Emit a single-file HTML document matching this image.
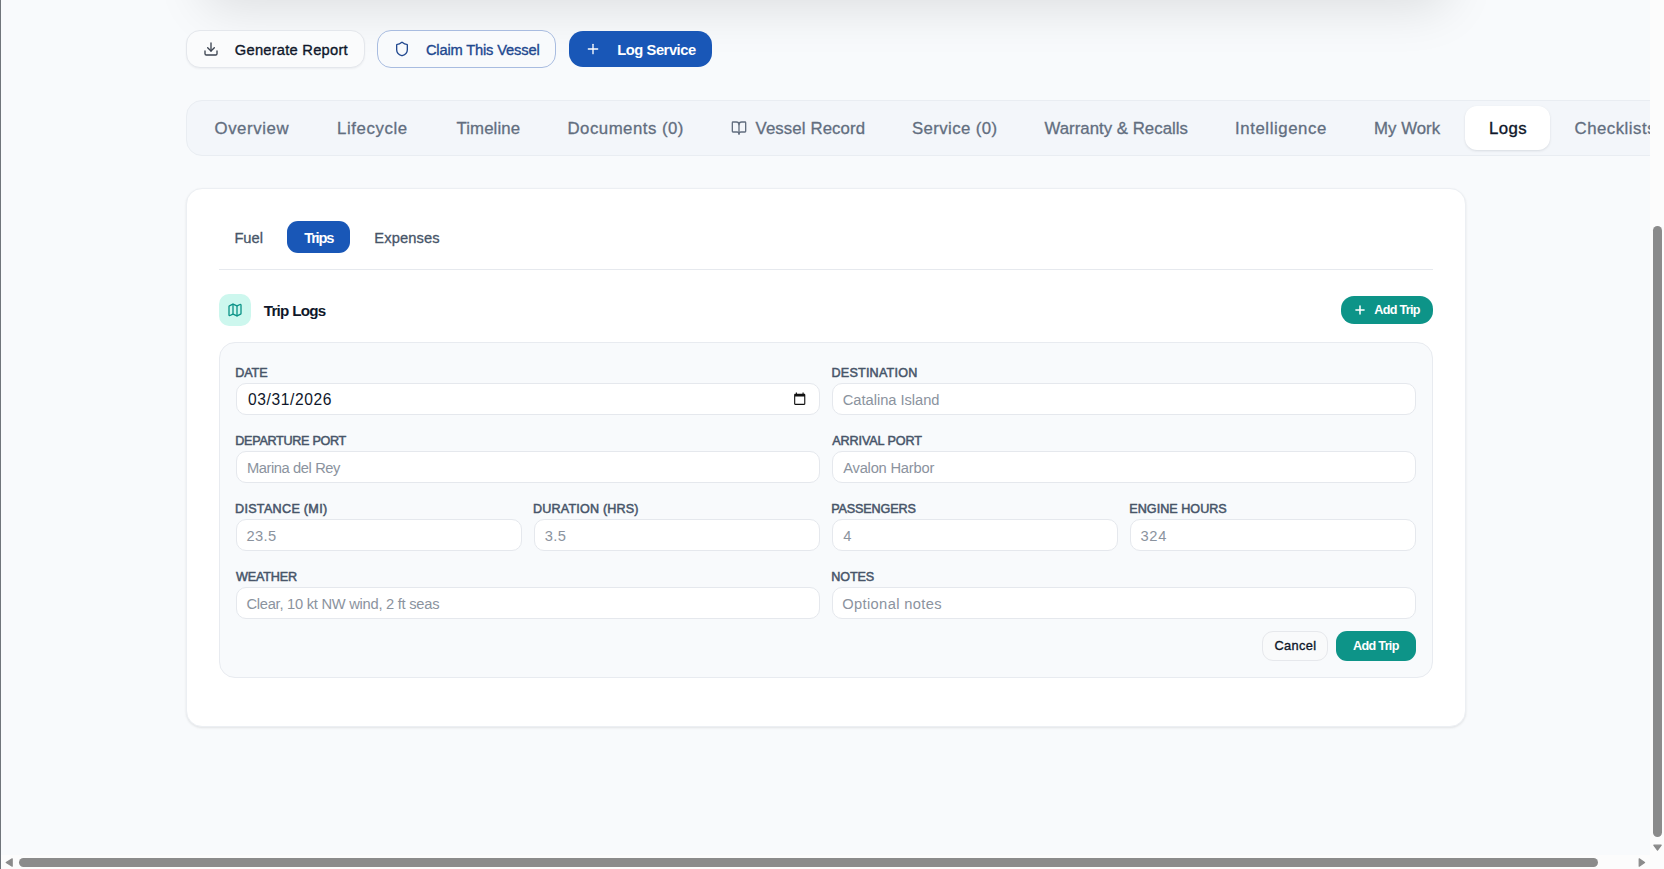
<!DOCTYPE html>
<html lang="en">
<head>
<meta charset="utf-8">
<title>Vessel Logs</title>
<style>
*{box-sizing:border-box;margin:0;padding:0}
html,body{width:1664px;height:869px;overflow:hidden}
body{position:relative;background:#f8fafc;font-family:"Liberation Sans",sans-serif;color:#0f172a;-webkit-font-smoothing:antialiased}
.abs{position:absolute}
.t{position:absolute;white-space:nowrap;line-height:1}
/* page chrome */
#leftedge{left:0;top:0;width:1px;height:869px;background:#70757b}
#vtrack{left:1650px;top:0;width:14px;height:869px;background:#fcfcfc}
#htrack{left:1px;top:855px;width:1649px;height:14px;background:#fcfcfc}
#vthumb{left:1653px;top:226px;width:9px;height:611px;border-radius:5px;background:#8b8b8b}
#hthumb{left:19px;top:858px;width:1579px;height:9px;border-radius:5px;background:#8b8b8b}
/* top shadow from card above */
#topshadow{left:204px;top:-300px;width:1244px;height:100px;border-radius:16px;box-shadow:0 208px 50px 0 rgba(0,0,0,.114)}
/* action buttons */
.btn{position:absolute;top:30px;height:38px;border-radius:14px}
#b1{left:186px;width:179px;background:#fafbfc;border:1px solid #e4e7ec;box-shadow:0 1px 2px rgba(15,23,42,.05)}
#b2{left:377px;width:179px;background:#f8fafc;border:1px solid #a8bce0}
#b3{left:569px;width:143px;background:#1957b7;top:31px;height:36px}
/* tab bar */
#tabbar{left:186px;top:100px;width:1500px;height:56px;border-radius:16px;background:#f3f6fa;border:1px solid #e9edf2}
#tabactive{left:1465px;top:106px;width:85px;height:44px;border-radius:12px;background:#fff;box-shadow:0 1px 3px rgba(15,23,42,.08),0 1px 2px rgba(15,23,42,.04)}
.tab{font-size:17px;color:#64748b;top:119px}
/* card */
#card{left:186px;top:188px;width:1280px;height:539px;border-radius:16px;background:#fff;border:1px solid #eceff3;box-shadow:0 1px 3px rgba(0,0,0,.06),0 1px 2px rgba(0,0,0,.04)}
#pill{left:287px;top:221px;width:63px;height:32px;border-radius:11px;background:#1957b7}
.sub{font-size:15px;color:#475569;top:230px}
#divider{left:219px;top:269px;width:1214px;height:1px;background:#e6e9ee}
#icobox{left:219px;top:294px;width:32px;height:32px;border-radius:10px;background:#cdf7ee}
#addtop{left:1341px;top:296px;width:92px;height:28px;border-radius:13px;background:#0d9488}
/* form */
#form{left:219px;top:342px;width:1214px;height:336px;border-radius:16px;background:#f8fafc;border:1px solid #e8ebf0}
.lbl{font-size:12px;font-weight:700;color:#475569;letter-spacing:.4px}
.inp{position:absolute;height:32px;border-radius:10px;background:#fff;border:1px solid #e5e8ed}
.ph{font-size:14px;color:#8e96a1}
#cancel{left:1262px;top:631px;width:66px;height:30px;border-radius:11px;background:#f9fafb;border:1px solid #e6e8ec}
#addbtm{left:1336px;top:631px;width:80px;height:30px;border-radius:11px;background:#0d9488}
</style>
</head>
<body>
<div class="abs" id="topshadow"></div>

<!-- action buttons -->
<div class="btn" id="b1"></div>
<div class="btn" id="b2"></div>
<div class="btn" id="b3"></div>

<!-- tab bar -->
<div class="abs" id="tabbar"></div>
<div class="abs" id="tabactive"></div>

<!-- card -->
<div class="abs" id="card"></div>
<div class="abs" id="pill"></div>
<div class="abs" id="divider"></div>
<div class="abs" id="icobox"></div>
<div class="abs" id="addtop"></div>
<div class="abs" id="form"></div>
<div class="abs" id="cancel"></div>
<div class="abs" id="addbtm"></div>

<!-- inputs -->
<div class="inp" style="left:236px;top:383px;width:584px"></div>
<div class="inp" style="left:832px;top:383px;width:584px"></div>
<div class="inp" style="left:236px;top:451px;width:584px"></div>
<div class="inp" style="left:832px;top:451px;width:584px"></div>
<div class="inp" style="left:236px;top:587px;width:584px"></div>
<div class="inp" style="left:832px;top:587px;width:584px"></div>
<div class="inp" style="left:236px;top:519px;width:286px"></div>
<div class="inp" style="left:534px;top:519px;width:286px"></div>
<div class="inp" style="left:832px;top:519px;width:286px"></div>
<div class="inp" style="left:1130px;top:519px;width:286px"></div>

<!-- icons -->
<svg class="abs" style="left:203px;top:41px" width="16" height="16" viewBox="0 0 24 24" fill="none" stroke="#3b4350" stroke-width="2" stroke-linecap="round" stroke-linejoin="round"><path d="M21 15v4a2 2 0 0 1-2 2H5a2 2 0 0 1-2-2v-4"/><path d="M7 10l5 5 5-5"/><path d="M12 15V3"/></svg>
<svg class="abs" style="left:394px;top:41px" width="16" height="16" viewBox="0 0 24 24" fill="none" stroke="#21488f" stroke-width="2" stroke-linecap="round" stroke-linejoin="round"><path d="M20 13c0 5-3.5 7.5-7.66 8.95a1 1 0 0 1-.67-.01C7.5 20.500 4 18 4 13V6a1 1 0 0 1 1-1c2 0 4.500-1.200 6.240-2.720a1.170 1.170 0 0 1 1.520 0C14.510 3.810 17 5 19 5a1 1 0 0 1 1 1z"/></svg>
<svg class="abs" style="left:585px;top:41px" width="16" height="16" viewBox="0 0 24 24" fill="none" stroke="#ffffff" stroke-width="2" stroke-linecap="round" stroke-linejoin="round"><path d="M5 12h14"/><path d="M12 5v14"/></svg>
<svg class="abs" style="left:731px;top:120px" width="16" height="16" viewBox="0 0 24 24" fill="none" stroke="#626e7f" stroke-width="2" stroke-linecap="round" stroke-linejoin="round"><path d="M12 7v14"/><path d="M3 18a1 1 0 0 1-1-1V4a1 1 0 0 1 1-1h5a4 4 0 0 1 4 4 4 4 0 0 1 4-4h5a1 1 0 0 1 1 1v13a1 1 0 0 1-1 1h-6a3 3 0 0 0-3 3 3 3 0 0 0-3-3z"/></svg>
<svg class="abs" style="left:227px;top:302px" width="16" height="16" viewBox="0 0 24 24" fill="none" stroke="#0d9488" stroke-width="2" stroke-linecap="round" stroke-linejoin="round"><path d="M14.106 5.553a2 2 0 0 0 1.788 0l3.659-1.830A1 1 0 0 1 21 4.619v12.764a1 1 0 0 1-.553.894l-4.553 2.277a2 2 0 0 1-1.788 0l-4.212-2.106a2 2 0 0 0-1.788 0l-3.659 1.830A1 1 0 0 1 3 19.381V6.618a1 1 0 0 1 .553-.894l4.553-2.277a2 2 0 0 1 1.788 0z"/><path d="M15 5.764v15"/><path d="M9 3.236v15"/></svg>
<svg class="abs" style="left:1353px;top:303px" width="14" height="14" viewBox="0 0 24 24" fill="none" stroke="#ffffff" stroke-width="2.6" stroke-linecap="round" stroke-linejoin="round"><path d="M5 12h14"/><path d="M12 5v14"/></svg>
<svg class="abs" style="left:793.28px;top:391.54px" width="13.44" height="13.44" viewBox="0 0 24 24"><path fill="#111" d="M20 3h-1V1h-2v2H7V1H5v2H4c-1.100 0-2 .9-2 2v16c0 1.100.9 2 2 2h16c1.100 0 2-.9 2-2V5c0-1.100-.9-2-2-2zm0 18H4V8h16v13z"/></svg>

<!-- texts -->
<div class="t" id="gen" style="left:234.80px;top:43px;font-size:14.7px;font-weight:400;color:#0f172a;letter-spacing:0.243px;-webkit-text-stroke:0.35px #0f172a;">Generate Report</div>
<div class="t" id="claim" style="left:425.90px;top:43px;font-size:14.7px;font-weight:400;color:#21488f;letter-spacing:-0.169px;-webkit-text-stroke:0.35px #21488f;">Claim This Vessel</div>
<div class="t" id="logsvc" style="left:617.30px;top:43px;font-size:14.7px;font-weight:700;color:#ffffff;letter-spacing:-0.440px;">Log Service</div>
<div class="t" id="t1" style="left:214.50px;top:121px;font-size:16.8px;font-weight:400;color:#626e7f;letter-spacing:0.586px;-webkit-text-stroke:0.3px #626e7f;">Overview</div>
<div class="t" id="t2" style="left:337.00px;top:121px;font-size:16.8px;font-weight:400;color:#626e7f;letter-spacing:0.613px;-webkit-text-stroke:0.3px #626e7f;">Lifecycle</div>
<div class="t" id="t3" style="left:456.50px;top:121px;font-size:16.8px;font-weight:400;color:#626e7f;letter-spacing:0.114px;-webkit-text-stroke:0.3px #626e7f;">Timeline</div>
<div class="t" id="t4" style="left:567.50px;top:121px;font-size:16.8px;font-weight:400;color:#626e7f;letter-spacing:0.492px;-webkit-text-stroke:0.3px #626e7f;">Documents (0)</div>
<div class="t" id="t5" style="left:755.50px;top:121px;font-size:16.8px;font-weight:400;color:#626e7f;letter-spacing:0.117px;-webkit-text-stroke:0.3px #626e7f;">Vessel Record</div>
<div class="t" id="t6" style="left:912.00px;top:121px;font-size:16.8px;font-weight:400;color:#626e7f;letter-spacing:0.390px;-webkit-text-stroke:0.3px #626e7f;">Service (0)</div>
<div class="t" id="t7" style="left:1044.50px;top:121px;font-size:16.8px;font-weight:400;color:#626e7f;letter-spacing:0.024px;-webkit-text-stroke:0.3px #626e7f;">Warranty &amp; Recalls</div>
<div class="t" id="t8" style="left:1235.00px;top:121px;font-size:16.8px;font-weight:400;color:#626e7f;letter-spacing:0.582px;-webkit-text-stroke:0.3px #626e7f;">Intelligence</div>
<div class="t" id="t9" style="left:1374.00px;top:121px;font-size:16.8px;font-weight:400;color:#626e7f;letter-spacing:0.033px;-webkit-text-stroke:0.3px #626e7f;">My Work</div>
<div class="t" id="t10" style="left:1489.00px;top:121px;font-size:16.8px;font-weight:400;color:#0f172a;letter-spacing:0.400px;-webkit-text-stroke:0.35px #0f172a;">Logs</div>
<div class="t" id="t11" style="left:1574.50px;top:121px;font-size:16.8px;font-weight:400;color:#626e7f;letter-spacing:0.511px;-webkit-text-stroke:0.3px #626e7f;">Checklists</div>
<div class="t" id="s1" style="left:234.40px;top:231px;font-size:14.7px;font-weight:400;color:#475569;letter-spacing:-0.000px;-webkit-text-stroke:0.3px #475569;">Fuel</div>
<div class="t" id="s2" style="left:304.30px;top:231px;font-size:14.7px;font-weight:700;color:#ffffff;letter-spacing:-1.275px;">Trips</div>
<div class="t" id="s3" style="left:374.30px;top:231px;font-size:14.7px;font-weight:400;color:#475569;letter-spacing:0.129px;-webkit-text-stroke:0.3px #475569;">Expenses</div>
<div class="t" id="tl" style="left:263.70px;top:303px;font-size:15.2px;font-weight:700;color:#0f172a;letter-spacing:-0.725px;">Trip Logs</div>
<div class="t" id="at1" style="left:1374.30px;top:304px;font-size:12.6px;font-weight:700;color:#ffffff;letter-spacing:-0.700px;">Add Trip</div>
<div class="t" id="l1" style="left:235.30px;top:367px;font-size:12.6px;font-weight:400;color:#475569;letter-spacing:-0.133px;-webkit-text-stroke:0.5px #475569;">DATE</div>
<div class="t" id="l2" style="left:831.50px;top:367px;font-size:12.6px;font-weight:400;color:#475569;letter-spacing:0.200px;-webkit-text-stroke:0.5px #475569;">DESTINATION</div>
<div class="t" id="l3" style="left:235.30px;top:435px;font-size:12.6px;font-weight:400;color:#475569;letter-spacing:-0.292px;-webkit-text-stroke:0.5px #475569;">DEPARTURE PORT</div>
<div class="t" id="l4" style="left:832.20px;top:435px;font-size:12.6px;font-weight:400;color:#475569;letter-spacing:-0.091px;-webkit-text-stroke:0.5px #475569;">ARRIVAL PORT</div>
<div class="t" id="l5" style="left:235.00px;top:503px;font-size:12.6px;font-weight:400;color:#475569;letter-spacing:0.292px;-webkit-text-stroke:0.5px #475569;">DISTANCE (MI)</div>
<div class="t" id="l6" style="left:533.10px;top:503px;font-size:12.6px;font-weight:400;color:#475569;letter-spacing:0.162px;-webkit-text-stroke:0.5px #475569;">DURATION (HRS)</div>
<div class="t" id="l7" style="left:831.20px;top:503px;font-size:12.6px;font-weight:400;color:#475569;letter-spacing:-0.133px;-webkit-text-stroke:0.5px #475569;">PASSENGERS</div>
<div class="t" id="l8" style="left:1129.30px;top:503px;font-size:12.6px;font-weight:400;color:#475569;letter-spacing:0.018px;-webkit-text-stroke:0.5px #475569;">ENGINE HOURS</div>
<div class="t" id="l9" style="left:236.00px;top:571px;font-size:12.6px;font-weight:400;color:#475569;letter-spacing:-0.167px;-webkit-text-stroke:0.5px #475569;">WEATHER</div>
<div class="t" id="l10" style="left:831.20px;top:571px;font-size:12.6px;font-weight:400;color:#475569;letter-spacing:-0.100px;-webkit-text-stroke:0.5px #475569;">NOTES</div>
<div class="t" id="p1" style="left:248.10px;top:392px;font-size:15.6px;font-weight:400;color:#0f172a;letter-spacing:0.589px;">03/31/2026</div>
<div class="t" id="p2" style="left:842.80px;top:393px;font-size:14.7px;font-weight:400;color:#8b939e;letter-spacing:-0.036px;">Catalina Island</div>
<div class="t" id="p3" style="left:246.90px;top:461px;font-size:14.7px;font-weight:400;color:#8b939e;letter-spacing:-0.400px;">Marina del Rey</div>
<div class="t" id="p4" style="left:843.20px;top:461px;font-size:14.7px;font-weight:400;color:#8b939e;letter-spacing:-0.208px;">Avalon Harbor</div>
<div class="t" id="p5" style="left:246.40px;top:529px;font-size:14.7px;font-weight:400;color:#8b939e;letter-spacing:0.433px;">23.5</div>
<div class="t" id="p6" style="left:544.80px;top:529px;font-size:14.7px;font-weight:400;color:#8b939e;letter-spacing:0.350px;">3.5</div>
<div class="t" id="p7" style="left:843.20px;top:529px;font-size:14.7px;font-weight:400;color:#8b939e;letter-spacing:0.000px;">4</div>
<div class="t" id="p8" style="left:1140.50px;top:529px;font-size:14.7px;font-weight:400;color:#8b939e;letter-spacing:0.700px;">324</div>
<div class="t" id="p9" style="left:246.40px;top:597px;font-size:14.7px;font-weight:400;color:#8b939e;letter-spacing:-0.257px;">Clear, 10 kt NW wind, 2 ft seas</div>
<div class="t" id="p10" style="left:842.20px;top:597px;font-size:14.7px;font-weight:400;color:#8b939e;letter-spacing:0.362px;">Optional notes</div>
<div class="t" id="cancel_t" style="left:1274.40px;top:640px;font-size:12.8px;font-weight:400;color:#0f172a;letter-spacing:0.360px;-webkit-text-stroke:0.35px #0f172a;">Cancel</div>
<div class="t" id="at2" style="left:1353.10px;top:640px;font-size:12.6px;font-weight:700;color:#ffffff;letter-spacing:-0.686px;">Add Trip</div>

<!-- chrome -->
<div class="abs" id="vtrack"></div>
<div class="abs" id="htrack"></div>
<div class="abs" id="vthumb"></div>
<div class="abs" id="hthumb"></div>
<svg class="abs" style="left:0;top:0" width="1664" height="869" viewBox="0 0 1664 869"><g fill="#8b8b8b" stroke="#8b8b8b" stroke-width="1.2" stroke-linejoin="round"><path d="M1653.800 845.200h7.400l-3.700 5z"/><path d="M1639.200 858.800v7.400l5.400-3.700z"/><path d="M12.200 858.800v7.400l-6-3.700z"/></g></svg>
<div class="abs" id="leftedge"></div>
</body>
</html>
